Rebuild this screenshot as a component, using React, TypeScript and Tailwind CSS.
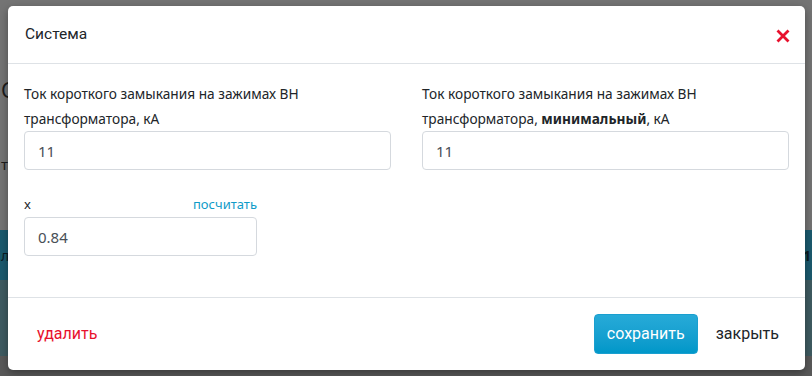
import React from 'react';

const bodyFont = { fontFamily: '"Noto Sans", "Open Sans", sans-serif' };

function Field({ label, value }: { label: React.ReactNode; value: string }) {
    return (
        <div className="flex flex-1 flex-col">
            <div className="text-[13.7px] leading-[25px] text-[#212529]">{label}</div>
            <input
                defaultValue={value}
                className="h-[39px] w-full rounded-[4px] border border-[#d5d9de] bg-white px-[13px] text-[15px] text-[#495057] outline-none"
                style={bodyFont}
            />
        </div>
    );
}

export default function App() {
    return (
        <div className="relative h-[376px] w-[812px] overflow-hidden bg-[#747474]" style={{ fontFamily: 'Roboto, "Liberation Sans", sans-serif' }}>
            {/* затемнённая страница под модалкой */}
            <div className="flex h-full flex-col">
                <div className="h-[230px] pl-[1px]">
                    <div className="mt-[78px] text-[21px] leading-[24px] text-[#1c1c1c]" style={bodyFont}>С</div>
                    <div className="mt-[52px] text-[15px] leading-[20px] text-[#1c1c1c]" style={bodyFont}>т</div>
                </div>
                <div className="flex h-[50px] items-center justify-between bg-[#1b5a6e] pr-[1px] text-[14px] text-[#0c1c22]" style={bodyFont}>
                    <span className="pl-[1px]">л</span>
                    <span className="font-bold">1</span>
                </div>
                <div className="h-[76px] bg-[#3f5b61]" />
                <div className="flex-1 bg-[#595959]" />
            </div>

            {/* модальное окно */}
            <div className="absolute left-[8px] top-[6px] flex h-[364px] w-[797px] flex-col rounded-[5px] bg-white shadow-[0_3px_8px_rgba(0,0,0,0.35)]">
                <div className="flex h-[58px] items-center justify-between border-b border-[#dee2e6] pl-[17px] pr-[14px]">
                    <span className="text-[15.5px] text-[#212529]">Система</span>
                    <svg width="14" height="14" viewBox="0 0 14 14" className="mr-[1px] mt-[2px]">
                        <path d="M1.5 1.5 L12.5 12.5 M12.5 1.5 L1.5 12.5" stroke="#e8112d" strokeWidth="2.8" strokeLinecap="butt" />
                    </svg>
                </div>

                <div className="flex flex-1 flex-col px-[16px] pt-[17px]" style={bodyFont}>
                    <div className="flex gap-[31px]">
                        <Field label={<>Ток короткого замыкания на зажимах ВН<br />трансформатора, кА</>} value="11" />
                        <Field
                            label={<>Ток короткого замыкания на зажимах ВН<br />трансформатора, <b className="font-bold">минимальный</b>, кА</>}
                            value="11"
                        />
                    </div>
                    <div className="mt-[22px] w-[233px]">
                        <div className="flex w-[233px] items-center justify-between text-[13px] leading-[25px]">
                            <span className="text-[#212529]">x</span>
                            <span className="text-[#0f9bc8]">посчитать</span>
                        </div>
                        <input
                            defaultValue="0.84"
                            className="block h-[39px] w-[233px] rounded-[4px] border border-[#d5d9de] bg-white px-[13px] text-[15px] text-[#495057] outline-none"
                            style={bodyFont}
                        />
                    </div>
                </div>

                <div className="flex h-[73px] items-center justify-between border-t border-[#dee2e6] pl-[29px] pr-[26px]">
                    <span className="text-[16px] text-[#e8112d]">удалить</span>
                    <div className="flex items-center gap-[18px]">
                        <button className="h-[40px] w-[104px] rounded-[4px] border border-[#1a9fcf] bg-gradient-to-b from-[#26aad8] to-[#0097c9] text-[16px] text-white">
                            сохранить
                        </button>
                        <span className="text-[16px] text-[#212529]">закрыть</span>
                    </div>
                </div>
            </div>
        </div>
    );
}
